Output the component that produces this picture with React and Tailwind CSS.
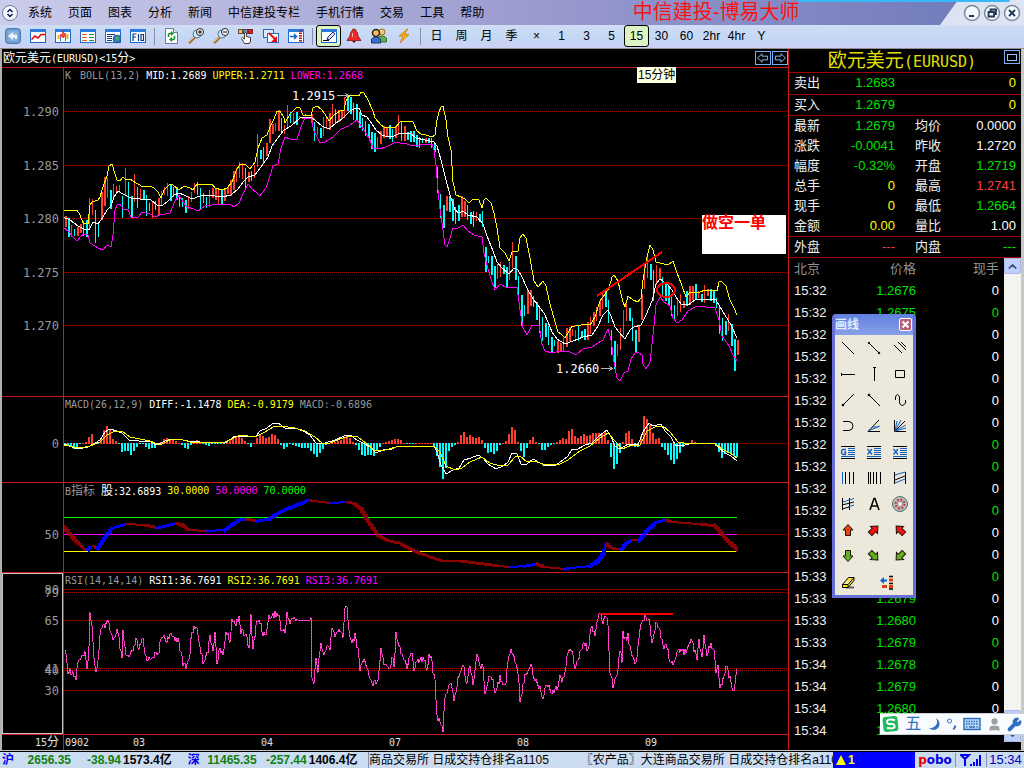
import { ChevronDown, ChevronUp, User, Wrench } from 'lucide-react';
import clsx from 'clsx';

const SANS = "font-['Liberation_Sans','Noto_Sans_CJK_SC',sans-serif]";
const MONO = "font-['DejaVu_Sans_Mono','Noto_Sans_CJK_SC',monospace]";

/* ---------- datos ---------- */

const menus = ['系统', '页面', '图表', '分析', '新闻', '中信建投专栏', '手机行情', '交易', '工具', '帮助'];
const periods = ['日', '周', '月', '季', '×', '1', '3', '5', '15', '30', '60', '2hr', '4hr', 'Y'];

const quotes = [
  ['最新', '1.2679', 'text-[#00e000]', '均价', '0.0000', 'text-white'],
  ['涨跌', '-0.0041', 'text-[#00e000]', '昨收', '1.2720', 'text-white'],
  ['幅度', '-0.32%', 'text-[#00e000]', '开盘', '1.2719', 'text-[#00e000]'],
  ['总手', '0', 'text-[#ffff00]', '最高', '1.2741', 'text-[#ff4040]'],
  ['现手', '0', 'text-[#ffff00]', '最低', '1.2664', 'text-[#00e000]'],
  ['金额', '0.00', 'text-[#ffff00]', '量比', '1.00', 'text-white'],
  ['外盘', '---', 'text-[#ff4040]', '内盘', '---', 'text-[#00e000]'],
];

// hora, precio, 1 = volumen en verde
const ticks = [
  ['15:32', '1.2676', 0], ['15:32', '1.2675', 1], ['15:32', '1.2676', 0], ['15:32', '1.2675', 0],
  ['15:32', '1.2676', 0], ['15:32', '1.2677', 0], ['15:32', '1.2676', 0], ['15:32', '1.2675', 1],
  ['15:32', '1.2676', 1], ['15:32', '1.2677', 0], ['15:32', '1.2676', 1], ['15:33', '1.2677', 0],
  ['15:33', '1.2678', 0], ['15:33', '1.2677', 1], ['15:33', '1.2679', 0], ['15:33', '1.2680', 0],
  ['15:33', '1.2679', 1], ['15:34', '1.2678', 1], ['15:34', '1.2679', 0], ['15:34', '1.2680', 0],
  ['15:34', '1.2679', 0],
];

const upper = '63,210 77,210 80,215 83,223 88,224 90,205 92,202 98,200 100,197 102,190 107,176 109,166 112,164 115,174 117,180 120,181 123,177 126,180 130,179 136,183 140,185 142,187 150,186 154,188 158,192 161,198 164,190 167,187 170,184 173,185 179,190 184,186 190,188 193,190 197,184 212,184 215,188 222,190 227,188 232,182 236,171 240,164 246,165 250,169 255,162 258,148 262,138 267,135 270,127 274,119 277,111 280,111 284,118 285,123 290,114 297,107 300,108 303,115 311,116 313,108 317,106 321,109 325,114 329,121 334,115 340,111 344,110 346,101 350,95 359,96 361,92 364,93 368,100 373,111 375,118 381,125 384,127 395,128 400,122 410,121 413,122 417,131 421,134 426,135 432,137 435,135 437,120 439,112 441,107 443,106 446,120 448,137 451,150 453,182 456,195 461,197 465,199 469,203 473,199 479,200 482,208 484,200 486,198 491,203 494,213 497,228 500,248 505,253 509,261 512,252 518,251 520,238 523,234 526,238 530,258 534,281 538,287 543,281 546,286 549,300 553,315 558,332 561,334 565,338 572,326 575,326 588,324 590,325 595,317 600,301 605,294 609,288 612,277 614,275 618,281 620,290 623,302 625,307 628,296 633,300 638,302 641,298 643,280 647,257 650,245 653,250 656,262 660,263 668,265 673,261 677,273 681,283 686,297 690,292 700,292 705,290 717,291 719,282 721,281 726,286 730,300 734,308 737,315';
const middle = '63,217 70,220 78,226 84,229 89,230 93,222 98,224 103,217 107,210 111,206 114,197 118,191 123,194 131,198 140,199 150,199 157,205 163,205 168,201 174,195 179,193 184,195 190,198 195,198 202,195 215,196 222,197 231,195 238,189 243,182 248,177 255,175 261,167 268,157 272,146 278,138 284,130 291,126 300,118 305,117 311,117 316,121 322,126 329,129 336,123 342,119 350,111 356,108 359,108 362,115 367,117 372,124 376,130 382,135 388,137 394,136 400,133 410,133 416,138 425,140 434,142 437,146 441,160 445,176 450,195 455,210 459,213 463,211 468,215 477,217 483,224 487,236 493,251 497,262 502,268 509,274 514,268 518,270 522,277 527,288 533,299 538,305 544,313 548,322 552,332 557,339 565,344 573,341 583,337 592,335 598,326 603,315 608,310 611,316 615,327 619,332 625,339 630,330 634,327 641,325 646,315 652,301 656,284 660,279 667,284 672,290 676,297 681,304 688,305 695,300 707,299 716,300 720,307 725,315 731,325 737,338';
const lower = '63,227 69,232 73,237 77,241 81,236 84,234 88,235 90,243 95,246 98,248 103,250 107,245 111,247 113,235 115,210 117,205 120,204 123,209 128,210 131,217 138,217 142,212 150,214 155,217 160,215 170,213 175,201 179,195 183,202 187,207 194,209 198,211 205,206 212,205 222,204 231,205 234,207 239,203 243,194 248,184 252,189 256,192 260,196 266,188 270,176 273,166 278,164 281,148 285,137 290,139 297,139 302,124 305,118 311,118 314,131 320,143 325,142 333,137 341,129 349,126 357,120 362,127 369,138 373,148 379,149 386,147 396,142 400,143 407,144 413,146 420,145 432,144 434,150 436,165 438,190 440,209 443,230 445,245 447,247 450,238 453,228 458,228 463,225 468,231 474,235 482,237 484,253 487,265 490,276 495,290 500,284 507,288 517,287 520,310 523,328 527,335 532,325 539,325 542,344 545,351 552,353 560,351 570,352 576,355 583,349 592,347 598,343 603,340 608,329 611,340 614,362 617,378 620,381 624,373 628,371 631,359 635,353 638,352 642,355 643,364 646,369 650,362 653,335 656,305 660,297 664,302 670,306 673,318 677,323 682,320 688,311 697,306 715,308 719,320 722,336 729,346 733,355 737,361';
const price = '64,217 67,228 72,232 76,231 82,226 87,230 89,215 91,200 94,222 97,238 99,220 103,195 107,188 110,198 112,193 116,190 120,188 122,205 124,190 126,175 129,205 132,210 134,190 137,198 142,192 147,207 153,208 158,205 162,193 168,191 175,194 180,200 185,207 190,198 196,186 200,197 206,201 212,194 220,196 226,193 230,187 234,177 240,168 246,178 250,180 254,170 257,150 262,155 266,150 269,132 274,128 278,120 283,133 287,118 293,117 311,117 314,130 320,132 327,122 333,113 340,117 345,104 349,106 356,112 361,125 367,130 373,145 379,138 385,130 392,136 398,126 402,133 410,136 418,140 425,141 433,142 435,150 437,180 439,205 442,210 444,218 446,205 450,202 453,215 457,215 462,206 467,212 472,222 477,215 482,220 485,258 490,260 494,278 498,270 502,268 507,280 512,255 517,275 520,310 524,312 528,300 532,298 537,312 541,328 546,330 551,345 556,345 562,345 567,336 572,333 578,335 585,332 590,326 596,315 600,305 604,297 607,302 610,335 613,358 617,350 621,335 625,310 628,310 632,330 636,345 640,325 642,290 645,270 649,265 653,285 658,270 661,285 666,292 670,300 673,312 680,304 687,300 692,292 700,297 706,292 712,296 717,305 720,325 724,330 728,322 731,335 734,355 737,347';
const macdBars = '64,0 70,-4 75,-6 78,-3 80,0 88,3 91,14 94,3 97,-3 100,2 103,12 107,18 110,14 113,5 117,2 119,0 122,-9 127,-7 131,-12 135,-6 139,-1 143,-1 148,-6 155,-5 159,-1 163,5 168,6 173,4 180,1 184,-4 188,-6 191,-2 196,4 199,3 203,-1 208,-3 212,-1 225,0 230,4 234,8 240,8 243,5 246,2 251,-4 255,2 259,10 262,8 268,5 271,11 276,8 279,3 283,-6 286,-5 290,-1 295,-3 302,-5 308,-5 313,-10 317,-14 321,-8 325,-3 328,-1 332,2 340,3 344,7 348,8 352,3 357,-3 360,-9 363,-13 370,-12 374,-13 379,-5 383,1 389,3 396,5 400,5 404,1 408,-1 415,0 425,1 433,0 436,-10 439,-20 443,-36 446,-25 449,-8 453,-3 457,0 460,7 463,14 467,7 471,9 475,5 480,8 483,2 486,-8 489,-11 492,-8 495,-12 499,-3 502,1 507,3 511,16 514,18 517,5 520,-4 523,-17 526,-8 529,2 532,9 535,3 539,-1 543,-9 548,-4 553,-1 557,2 562,6 566,5 571,18 574,8 578,6 583,10 588,8 593,11 600,11 605,12 607,10 610,-8 613,-26 616,-25 620,-10 623,2 625,10 629,13 632,5 635,-4 637,-8 640,3 642,12 644,28 648,24 652,14 655,4 659,6 662,-4 666,-8 670,-15 674,-21 678,-14 683,-4 688,0 692,4 697,1 714,1 718,-6 721,-16 726,-10 731,-11 737,-14';
const diff = '63,444 70,446 77,449 88,447 95,443 100,440 105,432 110,429 117,431 122,433 129,440 136,440 142,442 150,441 156,445 163,442 170,439 178,439 188,441 200,442 225,443 235,436 247,436 256,436 260,431 267,428 272,424 278,423 285,428 295,428 303,431 310,435 316,443 325,443 335,440 344,436 350,435 357,440 363,443 370,447 376,453 383,450 392,449 398,446 405,446 418,447 434,446 437,452 441,465 446,474 453,470 459,468 464,460 471,458 478,455 483,458 488,464 496,469 503,466 508,462 512,453 517,454 521,464 526,465 533,459 540,463 545,466 556,465 563,460 568,456 572,449 576,450 585,445 592,443 598,437 604,432 607,430 611,437 615,446 620,449 628,444 638,445 643,432 649,423 653,426 661,424 665,431 671,437 676,446 685,445 692,443 714,443 719,448 725,453 731,456 737,461';
const dea = '63,445 80,448 90,446 100,442 107,435 115,431 123,432 130,437 140,439 150,441 160,445 170,440 180,439 190,442 210,443 225,442 240,435 255,437 265,432 273,427 280,426 295,428 305,431 315,437 322,443 330,443 340,439 350,436 358,437 366,443 375,451 385,450 400,446 410,446 434,446 440,452 446,466 455,470 462,468 470,462 482,457 490,463 500,466 508,465 515,457 520,456 527,462 535,461 545,465 560,464 568,460 580,451 590,446 600,438 608,433 615,441 622,449 632,445 640,445 647,431 655,427 663,426 670,432 678,442 690,444 714,443 722,449 730,453 737,458';
const bLine = '64,527 71,535 78,543 85,549 88,550 91,547 94,546 98,548 107,535 113,528 120,526 126,524 145,525 158,528 170,525 178,523 182,525 190,530 208,531 225,530 232,525 240,520 247,519 257,521 270,519 280,512 300,504 310,500 313,501 330,503 348,502 355,504 362,510 370,524 380,537 390,541 400,543 420,553 442,561 460,561 500,566 510,567 525,566 537,564 545,567 565,569 570,568 590,566 598,561 604,552 607,544 612,548 617,549 622,549 628,542 633,540 640,540 647,531 657,522 667,520 672,522 700,524 715,526 720,531 728,541 737,549';
const rsi = '63,646 66,655 68,670 73,672 76,679 78,660 82,658 85,655 87,670 89,645 90,614 92,628 94,655 96,672 98,660 100,635 103,623 105,628 108,622 112,636 115,639 117,631 119,640 122,661 123,633 126,656 130,657 134,648 136,640 139,650 143,639 145,655 149,660 153,655 158,655 160,645 163,634 166,640 172,636 179,640 181,655 183,664 187,666 190,652 192,632 196,625 199,640 203,662 208,650 210,638 213,648 215,632 217,665 219,650 223,655 226,632 230,640 232,619 235,625 239,616 241,632 246,634 249,650 251,617 253,648 257,621 261,624 263,635 267,630 269,617 275,614 279,615 281,629 285,633 287,613 290,622 293,618 296,620 311,620 312,675 314,681 316,660 318,672 321,640 324,658 327,645 330,650 332,628 335,635 339,632 343,635 345,609 347,608 349,630 352,642 355,636 358,650 360,668 363,660 367,665 370,680 374,684 378,678 381,649 384,663 388,664 389,670 393,655 394,668 396,632 400,648 404,660 407,668 410,654 412,654 414,668 418,660 424,660 427,668 429,655 431,655 433,670 435,680 437,715 440,725 443,730 445,695 449,687 451,685 454,700 459,675 463,665 467,684 470,664 473,684 477,653 480,667 483,668 485,692 488,680 492,678 495,692 500,678 506,684 508,660 511,648 516,665 519,680 520,702 524,680 531,662 534,678 538,684 543,697 547,682 551,692 558,686 560,675 562,684 565,670 568,650 572,648 575,672 580,652 584,643 588,650 592,625 595,635 599,615 603,622 606,615 608,625 610,670 613,687 617,672 620,652 622,660 623,633 627,642 628,636 631,652 636,665 640,630 645,615 649,619 652,641 656,623 660,630 664,650 666,643 670,660 673,665 678,653 686,651 691,636 694,650 697,658 699,642 702,658 704,636 707,655 711,643 714,650 716,670 718,663 720,690 723,680 726,666 729,675 734,692 736,677';

// interpola una serie cada "step" px
const sample = (series, step = 2) => {
  const pts = series.split(' ').map((p) => p.split(',').map(Number));
  const out = [];
  let i = 0;
  for (let x = 65; x <= 737; x += step) {
    while (i < pts.length - 2 && pts[i + 1][0] < x) i++;
    const [x0, y0] = pts[i];
    const [x1, y1] = pts[i + 1];
    out.push([x, y0 + ((y1 - y0) * (x - x0)) / (x1 - x0)]);
  }
  return out;
};

const rand = (n) => {
  const v = Math.sin(n * 12.9898) * 43758.5453;
  return v - Math.floor(v);
};

const candles = sample(price, 3).map(([x, y], i, all) => {
  const prev = i ? all[i - 1][1] : y;
  const move = y - prev + (rand(i) - 0.5) * 7;
  const flat = x > 296 && x < 311;
  const size = flat ? 1 : 2 + rand(i + 500) * 6 + Math.min(Math.abs(y - prev) / 2, 9);
  return {
    x,
    top: Math.round(y - size + (rand(i + 90) - 0.5) * 4),
    h: Math.round(size * 2),
    w: rand(i + 40) > 0.5 ? 2 : 1,
    up: move < 0,
  };
});

/* ---------- gráficos ---------- */

const Plot = ({ top, height, children }) => (
  <svg
    className="absolute inset-0 h-full w-full"
    viewBox={`64 ${top} 724 ${height}`}
    preserveAspectRatio="none"
    shapeRendering="crispEdges"
    fill="none"
  >
    {children}
  </svg>
);

const GridLine = ({ y, color = '#a00000' }) => (
  <path d={`M64 ${y + 0.5}H788`} stroke={color} strokeDasharray="1 1" />
);

const Pane = ({ className, axis = [], top, height, legend, focused, notes, children }) => (
  <section className={clsx('flex border-b border-[#d01818]', className)}>
    <div className="relative w-[62px] shrink-0 border-r border-[#d01818]">
      {focused && <div className="absolute inset-0 border border-[#c8c8c8]" />}
      {axis.map(([label, y]) => (
        <span
          key={label}
          className={`absolute right-1 -translate-y-1/2 text-xs leading-4 text-[#989898] ${MONO}`}
          style={{ top: `${((y - top) / height) * 100}%` }}
        >
          {label}
        </span>
      ))}
    </div>
    <div className="relative min-w-0 flex-1">
      <Plot top={top} height={height}>{children}</Plot>
      <div className={`relative flex gap-[6px] pl-px text-[10px] leading-4 whitespace-nowrap ${MONO}`}>
        {legend.map(([text, color], i) => (
          <span key={i} className={color}>{text}</span>
        ))}
      </div>
      {notes}
    </div>
  </section>
);

const place = (x, y, top, height) => ({
  left: `${((x - 64) / 724) * 100}%`,
  top: `${((y - top) / height) * 100}%`,
});

const PriceNotes = () => (
  <>
    <span className={`absolute -translate-y-1/2 text-xs leading-4 text-white ${MONO}`} style={place(292, 96, 68, 328)}>1.2915</span>
    <span className={`absolute -translate-y-1/2 text-xs leading-4 text-white ${MONO}`} style={place(556, 369, 68, 328)}>1.2660</span>
    <div
      className="absolute h-[39px] w-[84px] bg-white text-base leading-4 font-bold text-[#ff0000]"
      style={place(702, 215, 68, 328)}
    >
      做空一单
    </div>
    <div
      role="tooltip"
      className="absolute bg-[#ffffe1] px-[1px] text-xs leading-4 whitespace-nowrap text-black"
      style={place(637, 67, 68, 328)}
    >
      15分钟
    </div>
  </>
);

const PricePane = () => (
  <Pane
    className="h-[329px]"
    top={68}
    height={328}
    axis={[['1.290', 112], ['1.285', 166], ['1.280', 219], ['1.275', 273], ['1.270', 326]]}
    legend={[
      ['K', 'pr-[3px] text-[#989898]'],
      ['BOLL(13,2)', 'text-[#989898]'],
      ['MID:1.2689', 'text-white'],
      ['UPPER:1.2711', 'text-[#ffff00]'],
      ['LOWER:1.2668', 'text-[#ff00ff]'],
    ]}
    notes={<PriceNotes />}
  >
    {[111, 165, 218, 272, 325].map((y) => <GridLine key={y} y={y} />)}
    {candles.map((c) => (
      <rect key={c.x} x={c.x} y={c.top} width={c.w} height={c.h} fill={c.up ? '#ff4030' : '#00ffff'} />
    ))}
    <polyline points={upper} stroke="#ffff00" />
    <polyline points={lower} stroke="#ff00ff" />
    <polyline points={middle} stroke="#ffffff" />
    <path d="M337 95.500H348M345 93L348 95.500L345 98M601 368.500H612M609 366L612 368.500L609 371" stroke="#b0b0b0" />
    <path d="M597 296L662 252" stroke="#ff0000" strokeWidth="2" />
    <ellipse cx="666" cy="290" rx="9" ry="7" stroke="#ff0000" strokeWidth="2" />
  </Pane>
);

const MacdPane = () => (
  <Pane
    className="h-[86px]"
    top={397}
    height={85}
    axis={[['0', 444]]}
    legend={[
      ['MACD(26,12,9)', 'text-[#989898]'],
      ['DIFF:-1.1478', 'text-white'],
      ['DEA:-0.9179', 'text-[#ffff00]'],
      ['MACD:-0.6896', 'text-[#989898]'],
    ]}
  >
    <GridLine y={443} />
    {sample(macdBars, 3).map(([x, v]) => {
      const h = Math.max(1, Math.round(Math.abs(v)));
      return <rect key={x} x={x - 1} y={v > 0 ? 444 - h : 443} width="2" height={h} fill={v > 0 ? '#ff4030' : '#00ffff'} />;
    })}
    <polyline points={diff} stroke="#ffffff" />
    <polyline points={dea} stroke="#ffff00" />
  </Pane>
);

const BPane = () => (
  <Pane
    className="h-[90px]"
    top={483}
    height={89}
    axis={[['50', 535]]}
    legend={[
      [<>B<span className="text-xs leading-4">指标</span></>, 'text-[#989898]'],
      [<><span className="text-xs leading-4">股</span>:32.6893</>, 'text-white'],
      ['30.0000', 'text-[#ffff00]'],
      ['50.0000', 'text-[#ff00ff]'],
      ['70.0000', 'text-[#00ff00]'],
    ]}
  >
    <GridLine y={534} />
    <path d="M64 517.500H737" stroke="#00ff00" />
    <path d="M64 534.500H737" stroke="#ff00ff" />
    <path d="M64 551.500H737" stroke="#ffff00" />
    {sample(bLine).map(([x, y], i, all) => {
      const slope = i < all.length - 1 ? all[i + 1][1] - y : 2;
      const h = 2 + Math.round(Math.abs(slope) * 2);
      return <rect key={x} x={x - 1} y={Math.round(y - h / 2)} width="2" height={h} fill={slope < 0 ? '#0000ff' : '#8b0000'} />;
    })}
  </Pane>
);

const RsiPane = () => {
  const points = sample(rsi, 1)
    .map(([x, y], i) => `${x},${x > 297 && x < 311 ? y : (y + (rand(i + 7) - 0.5) * 7).toFixed(1)}`)
    .join(' ');
  return (
    <Pane
      focused
      className="h-[162px]"
      top={573}
      height={161}
      axis={[['80', 590], ['79', 593], ['65', 621], ['41', 669], ['40', 671], ['30', 691]]}
      legend={[
        ['RSI(14,14,14)', 'text-[#989898]'],
        ['RSI1:36.7691', 'text-white'],
        ['RSI2:36.7691', 'text-[#ffff00]'],
        ['RSI3:36.7691', 'text-[#ff00ff]'],
      ]}
    >
      {[589, 592, 620, 668, 670, 690].map((y) => <GridLine key={y} y={y} />)}
      <polyline points={points} stroke="#ff20e0" />
      <polyline points={points} stroke="#f08090" strokeDasharray="1 2" />
      <path d="M600 614H673" stroke="#ff0000" strokeWidth="2" />
    </Pane>
  );
};

const TimeAxis = () => (
  <div className={`flex h-[15px] text-[10px] leading-[15px] text-[#e0e0e0] ${MONO}`}>
    <div className="w-[62px] shrink-0 border-r border-[#d01818] pr-1 text-right">
      15<span className="text-xs leading-[15px]">分</span>
    </div>
    <div className="relative flex-1">
      {[['0902', 65], ['03', 133], ['04', 261], ['07', 389], ['08', 517], ['09', 645]].map(([label, x]) => (
        <span key={label} className="absolute" style={{ left: `${((x - 64) / 724) * 100}%` }}>{label}</span>
      ))}
    </div>
  </div>
);

const ChartArea = () => (
  <main className="flex min-w-0 flex-1 flex-col border-r border-[#d01818]">
    <header className="flex h-[19px] items-center justify-between border-b border-[#d01818] pl-px">
      <h2 className={`text-[10px] leading-4 text-white ${MONO}`}>
        <span className="text-xs leading-4">欧元美元</span>(EURUSD)&lt;15<span className="text-xs leading-4">分</span>&gt;
      </h2>
      <div className="flex gap-px">
        {['M2 6.500L7 2V4.500H13V8.500H7V11Z', 'M14 6.500L9 2V4.500H3V8.500H9V11Z'].map((d, i) => (
          <button key={d} aria-label={i ? '下一个' : '上一个'} className="h-[14px] w-4 border border-[#70b0f8]">
            <svg viewBox="1 0 14 13" className="h-3 w-[14px]" fill="none" stroke="#90c8ff"><path d={d} /></svg>
          </button>
        ))}
      </div>
    </header>
    <PricePane />
    <MacdPane />
    <BPane />
    <RsiPane />
    <TimeAxis />
  </main>
);

/* ---------- barra de herramientas ---------- */

const Frame = ({ children }) => (
  <>
    <rect x="0.500" y="1.500" width="15" height="13" fill="#fff" stroke="#1c68c8" />
    <rect x="0" y="1" width="16" height="3" fill="#2c7ce0" />
    {children}
  </>
);

const Lens = ({ minus }) => (
  <>
    <path d="M1 15L7 9" stroke="#a07030" strokeWidth="2.500" />
    <path d="M1 14L7 8" stroke="#f0d080" />
    <circle cx="9" cy="6" r="4" fill="#c8e8ff" stroke="#607890" />
    <circle cx="12" cy="4" r="3.500" fill="#fff" stroke="#202020" />
    <path d={minus ? 'M10 4H14' : 'M10 4H14M12 2V6'} stroke="#000" />
  </>
);

const toolIcons = {
  返回: (
    <>
      <rect x="0.500" y="0.500" width="15" height="15" rx="3" fill="#6f9fd0" stroke="#4878b0" />
      <rect x="3" y="3" width="10" height="10" rx="2" fill="#88b0dc" />
      <path d="M3 8L8 4V6.500H12V11H10V9.500H8V12Z" fill="#e8f4ff" />
    </>
  ),
  走势图: <Frame><path d="M1.500 11.500L5 8L8 10L11 6.500H15" stroke="#e01010" strokeWidth="1.600" /></Frame>,
  K线图: (
    <Frame>
      <path d="M8 3V10M6 6V9M10 5V9" stroke="#e01010" strokeWidth="1.500" />
      <path d="M3.500 7V11M12.500 6V11" stroke="#f0b000" strokeWidth="2" />
      <path d="M5.500 9V13M10.500 9V13" stroke="#2070d0" />
    </Frame>
  ),
  报价: (
    <Frame>
      <path d="M2 6.500H7M2 9.500H7M2 12.500H7" stroke="#e06020" />
      <path d="M9 6.500H14M9 9.500H14M9 12.500H14" stroke="#209050" />
    </Frame>
  ),
  资讯: (
    <Frame>
      <path d="M2 6.500H10M2 8.500H7M2 10.500H7M2 12.500H7" stroke="#203878" />
      <circle cx="12" cy="11" r="4" fill="#3078c8" stroke="#204880" strokeWidth="0.700" />
      <path d="M10 9L13 8L14 11L12 13L11 11Z" fill="#48b048" />
    </Frame>
  ),
  F10: <Frame><path d="M3 13V6H6.500M3 9H6M8.500 6V13M11 6.500H13.500V12.500H11Z" stroke="#103880" strokeWidth="1.200" /></Frame>,
  刷新: (
    <>
      <path d="M2.500 0.500H10.500L14.500 4.500V15.500H2.500Z" fill="#fff" stroke="#608098" />
      <path d="M10.500 0.500V4.500H14.500" fill="#d8e8f0" stroke="#608098" />
      <path d="M5.500 9V6.500Q6 5 9 5.500M11.500 8V10.500Q11 12 8 11.500" stroke="#109030" strokeWidth="1.600" />
      <path d="M8 3L11 5.500L8 8ZM9 9L6 11.500L9 14Z" fill="#109030" />
    </>
  ),
  放大: <Lens />,
  缩小: <Lens minus />,
  选择: (
    <>
      <rect x="0.500" y="1.500" width="4" height="4" fill="#f0c050" stroke="#605030" />
      <rect x="5.500" y="1.500" width="4" height="4" fill="#7088b0" stroke="#404860" />
      <rect x="10.500" y="1.500" width="4" height="4" fill="#e02020" stroke="#802020" />
      <path d="M6.500 15.500L3.500 10.500L4.500 9.500L6.500 11V5Q7.500 4 8.500 5V8.500L12.500 9.500V13L11.500 15.500Z" fill="#fff" stroke="#403830" />
    </>
  ),
  下载: (
    <>
      <rect x="0.500" y="1.500" width="10" height="8" fill="#dcecff" stroke="#2868c0" />
      <rect x="4.500" y="5.500" width="11" height="9" fill="#fff" stroke="#2868c0" />
      <path d="M6 5L13 12" stroke="#e01010" strokeWidth="2" />
      <path d="M14 8V14H8Z" fill="#e01010" />
    </>
  ),
  插入: (
    <Frame>
      <path d="M2 8.500H8M6 6L8.500 8.500L6 11" stroke="#1060d0" strokeWidth="1.500" />
      <path d="M12.500 2V14" stroke="#d01010" strokeWidth="3" strokeDasharray="1.500 1" />
    </Frame>
  ),
  画线: (
    <Frame>
      <path d="M2 12.500H8" stroke="#000" />
      <path d="M6 12L7 9L12 4L14 6L9 11Z" fill="#e0e8ff" stroke="#202878" />
    </Frame>
  ),
  预警: (
    <>
      <path d="M8 1Q10 1 10 3Q12 4 12 8L15 12.500H1L4 8Q4 4 6 3Q6 1 8 1Z" fill="#f02828" stroke="#801010" strokeWidth="0.800" />
      <path d="M6.500 5V9" stroke="#ffb0a0" />
      <path d="M6 13H10L8 15Z" fill="#601010" />
    </>
  ),
  用户: (
    <>
      <circle cx="11" cy="4" r="3" fill="#f0c880" stroke="#a07020" />
      <path d="M7 14V10Q11 6 15.500 10V14Z" fill="#60b050" stroke="#307030" />
      <circle cx="5" cy="5" r="3.500" fill="#f0c060" stroke="#302010" strokeWidth="1.500" />
      <path d="M0.500 15V11Q5 7 9.500 11V15Z" fill="#3870c8" stroke="#183870" />
    </>
  ),
  闪电: <path d="M12 0.500L3 8H7L4 15L13 6.500H8.500Z" fill="#ffb010" stroke="#c07000" strokeWidth="0.700" />,
};

const ToolButton = ({ label, active, children }) => (
  <button
    aria-label={label}
    className={clsx(
      'flex h-[22px] w-[25px] shrink-0 items-center justify-center text-xs leading-4 whitespace-nowrap text-black',
      active && 'rounded-[3px] border border-black bg-[#dcf4c4]',
    )}
  >
    {children}
  </button>
);

const Separator = () => (
  <div className="flex w-2 shrink-0 justify-center py-[3px]"><div className="w-px bg-[#8890a8]" /></div>
);

const Toolbar = () => (
  <div role="toolbar" className="flex h-6 border-b border-[#909090] bg-linear-to-b from-[#cfdcf4] via-[#c4d8f4] to-[#ccd0f4]">
    {Object.entries(toolIcons).map(([name, icon]) => [
      (name === '刷新' || name === '画线') && <Separator key={`${name}-sep`} />,
      <ToolButton key={name} label={name} active={name === '画线'}>
        <svg viewBox="0 0 16 16" className="size-4" fill="none">{icon}</svg>
      </ToolButton>,
    ])}
    <Separator />
    {periods.map((p) => (
      <ToolButton key={p} label={p} active={p === '15'}>{p}</ToolButton>
    ))}
  </div>
);

const TitleBar = () => (
  <div className="relative flex h-[25px] bg-linear-to-r from-[#ccccec] via-[#9c9ccf] to-[#6c78b8]">
    <div className="flex w-5 shrink-0 items-center justify-center">
      <svg viewBox="0 0 18 18" className="size-[18px]" fill="none">
        <circle cx="9" cy="9" r="7.500" fill="#f0f8ff" stroke="#707890" />
        <path d="M6.500 8L9 5.500L11.500 8M6.500 10L9 12.500L11.500 10" stroke="#101840" strokeWidth="1.500" />
      </svg>
    </div>
    <nav className="flex shrink-0 text-xs leading-4 text-black">
      {menus.map((m) => (
        <button key={m} className="px-2 whitespace-nowrap">{m}</button>
      ))}
    </nav>
    <h1 className="min-w-0 flex-1 overflow-hidden text-center text-xl leading-6 whitespace-nowrap text-[#ff1010]">中信建投-博易大师</h1>
    <div className="flex w-[84px] shrink-0 items-center justify-end gap-[2px] bg-[#dce4f4] pr-[3px] [clip-path:polygon(18px_0,100%_0,100%_100%,0_100%)]">
      {[['最小化', 'M6 12H11'], ['还原', 'M7.500 7V5.500H13V10H11M5.500 8H11V12.500H5.500Z'], ['关闭', 'M6 6L12 12M12 6L6 12']].map(([name, d]) => (
        <button key={name} aria-label={name}>
          <svg viewBox="0 0 18 18" className="size-[18px]" fill="none">
            <circle cx="9" cy="9" r="7.500" fill="#f4f8fc" stroke="#808898" strokeWidth="1.500" />
            <path d={d} stroke="#203858" strokeWidth="1.800" />
          </svg>
        </button>
      ))}
    </div>
    <div className="absolute top-0 right-[14px] h-[2px] w-[212px] rounded-b-sm bg-[#38b8f8]" />
  </div>
);

/* ---------- panel de cotización ---------- */

const QuotePanel = () => (
  <aside className="relative flex w-[232px] shrink-0 flex-col text-[13px] leading-4 text-[#f0f0f0]">
    <div className="relative flex h-6 items-center justify-center border-b border-[#a00000] pr-[6px] text-[#e0e000]">
      <h2 className={`text-[19px] leading-5 ${MONO}`}>
        欧元美元<span className="text-[15px]">(EURUSD)</span>
      </h2>
      <button aria-label="展开" className="absolute top-px right-px flex h-[14px] w-4 items-center justify-center border border-[#70b0f8]">
        <span className="h-[7px] w-[10px] border border-[#90c8ff]" />
      </button>
    </div>
    <table className="w-full table-fixed">
      <tbody>
        {[['卖出', '1.2683'], ['买入', '1.2679']].map(([label, value]) => (
          <tr key={label} className="h-[21px] border-b border-[#a00000]">
            <th scope="row" className="w-[40px] p-0 pl-[5px] text-left font-normal">{label}</th>
            <td className="w-[66px] p-0 text-right text-[#00e000]">{value}</td>
            <td className="p-0 pr-[5px] text-right text-[#ffff00]">0</td>
          </tr>
        ))}
      </tbody>
    </table>
    <table className="w-full table-fixed">
      <tbody>
        {quotes.map(([a, av, ac, b, bv, bc], i) => (
          <tr key={a} className={i < 5 ? 'h-5' : 'h-[21px] border-b border-[#a00000]'}>
            <th scope="row" className="w-[40px] p-0 pl-[5px] text-left font-normal">{a}</th>
            <td className={clsx('w-[66px] p-0 text-right', ac)}>{av}</td>
            <th scope="row" className="w-[60px] p-0 pl-5 text-left font-normal">{b}</th>
            <td className={clsx('p-0 pr-[5px] text-right', bc)}>{bv}</td>
          </tr>
        ))}
      </tbody>
    </table>
    <div className="flex">
      <table className="min-w-0 flex-1 table-fixed">
        <thead className="text-[#909090]">
          <tr className="h-[22px]">
            <th className="w-[45px] p-0 pl-[5px] text-left font-normal">北京</th>
            <th className="w-[82px] p-0 text-right font-normal">价格</th>
            <th className="p-0 pr-[5px] text-right font-normal">现手</th>
          </tr>
        </thead>
        <tbody>
          {ticks.map(([time, value, green], i) => (
            <tr key={i} className="h-[22px]">
              <td className="p-0 pl-[5px]">{time}</td>
              <td className="p-0 text-right text-[#00e000]">{value}</td>
              <td className={clsx('p-0 pr-[5px] text-right', green ? 'text-[#00e000]' : 'text-white')}>0</td>
            </tr>
          ))}
        </tbody>
      </table>
      <div className="flex w-[17px] shrink-0 flex-col justify-between bg-[#f4f4ee]">
        <button aria-label="向上" className="flex h-4 items-center justify-center rounded-xs border border-[#a8b8e8] bg-[#c0d0fc]">
          <ChevronUp size={13} strokeWidth={3} color="#405080" />
        </button>
        <button aria-label="向下" className="flex h-8 items-end justify-center rounded-xs border border-[#a8b8e8] bg-[#c0d0fc]">
          <ChevronDown size={13} strokeWidth={3} color="#405080" />
        </button>
      </div>
    </div>
    <DrawPalette />
  </aside>
);

/* ---------- paleta de dibujo ---------- */

const Levels = ({ mark }) => (
  <>
    <path d="M1 2.500H15M1 14.500H15" stroke="#000" />
    <path d="M8 4.500H15M8 6.500H15M8 8.500H15M8 10.500H15M1 12.500H15" stroke="#1060c0" />
    <path d={mark} stroke="#1060c0" strokeWidth="1.300" />
  </>
);

const arrowUp = 'M8 2.500L13 8H10.500V13.500H5.500V8H3Z';
const Arrow = ({ turn, color }) => (
  <path d={arrowUp} fill={color} stroke="#201008" transform={`rotate(${turn} 8 8)`} />
);

const drawTools = [
  ['直线', <path d="M2 2L14 14" />],
  ['线段', <><path d="M2 2L13 13" /><circle cx="3" cy="3" r="0.700" fill="#000" /><circle cx="13" cy="13" r="0.800" fill="#000" /></>],
  ['平行线', <path d="M2 5L10 13M6 2L14 10M9 2L14 7" />],
  ['水平线', <path d="M1 8.500H15M1.500 7V10" />],
  ['垂直线', <path d="M8.500 1V15M7 1.500H10" />],
  ['矩形', <path d="M3.500 4.500H12.500V11.500H3.500Z" />],
  ['射线', <><path d="M3 13L14 2" /><circle cx="3" cy="13" r="0.900" fill="#000" /></>],
  ['下射线', <><path d="M3 3L14 14" /><circle cx="3" cy="3" r="0.900" fill="#000" /></>],
  ['曲线', <path d="M3.500 8V5Q5.500 0 7.500 5V11Q10 16 13.500 11V8" />],
  ['弧线', <path d="M3 3.500H9Q13 4 13 8T9 12.500H3" />],
  ['角度线', <><path d="M2 13.500L13 2M2 13.500H14" /><path d="M2 13L14 8M6 9L12 9" stroke="#1060c0" /></>],
  ['扇形线', <><path d="M2.500 2V13.500H14M3 13L13 3" /><path d="M3 13L5 3M3 13L9 2M3 13L14 7M3 13L14 10" stroke="#1060c0" /></>],
  ['黄金分割', <Levels mark="M6 5.500H3Q1.500 5.500 1.500 8T4 10.500H5.500V8H4" />],
  ['百分比线', <Levels mark="M1.500 5L6 10.500M6 5L1.500 10.500" />],
  ['波段线', <Levels mark="M1.500 5L6 10.500M6 5L1.500 10.500" />],
  ['周期线', <><path d="M5.500 2V14M9.500 2V14M13.500 2V14" /><path d="M2.500 2V14" stroke="#1060c0" /></>],
  ['费氏线', <path d="M2.500 2V14M4.500 2V14M7.500 2V14M10.500 2V14M14.500 2V14" />],
  ['回归带', <><path d="M2.500 2V14M13.500 2V14M3 10L13 6" /><path d="M3 5L13 2M3 13L13 9" stroke="#1060c0" /></>],
  ['通道', <><path d="M2.500 2V14M9.500 2V14M2 9L14 6M2 13L9 11" /><path d="M3 6L14 2.500M8 11L14 9" stroke="#1060c0" /></>],
  ['文字', <path d="M4 14L8 2.500H9L13 14M5.500 10H11.500" strokeWidth="1.500" />],
  ['图标', <><circle cx="8" cy="8" r="7.500" fill="#b8c0c0" stroke="#507070" /><circle cx="8" cy="8" r="4.500" stroke="#d03030" strokeWidth="2" strokeDasharray="2 1.500" /><circle cx="8" cy="8" r="2.500" fill="#f0f0f0" stroke="#888" /></>],
  ['上箭头', <Arrow turn={0} color="#e84010" />],
  ['右上箭头', <Arrow turn={45} color="#ff1010" />],
  ['左上箭头', <Arrow turn={-45} color="#ff1010" />],
  ['下箭头', <Arrow turn={180} color="#60b020" />],
  ['右下箭头', <Arrow turn={135} color="#60b020" />],
  ['左下箭头', <Arrow turn={225} color="#60b020" />],
];

const PaletteIcon = ({ children }) => (
  <svg viewBox="0 0 16 16" className="size-4" fill="none" stroke="#000">{children}</svg>
);

const DrawPalette = () => (
  <div className="absolute top-[265px] left-[43px] w-[84px] rounded-t-sm border-[3px] border-t-0 border-[#6870d8] bg-[#ece9dc]">
    <div className="flex h-[21px] items-center justify-between bg-linear-to-b from-[#6080e0] to-[#88a0e8] pr-[1px] text-xs font-bold text-[#e0ecff]">
      画线
      <button aria-label="关闭画线" className="flex size-[13px] items-center justify-center rounded-xs border border-white bg-[#b86078]">
        <svg viewBox="0 0 9 9" className="size-[9px]" stroke="#fff" strokeWidth="2"><path d="M1.500 1.500L7.500 7.500M7.500 1.500L1.500 7.500" /></svg>
      </button>
    </div>
    <div className="grid grid-cols-3">
      {drawTools.map(([name, icon]) => (
        <button key={name} aria-label={name} className="flex h-[26px] items-center justify-center">
          <PaletteIcon>{icon}</PaletteIcon>
        </button>
      ))}
    </div>
    <div className="flex h-[26px]">
      <button aria-label="删除" className="flex w-[26px] items-center justify-center">
        <PaletteIcon>
          <path d="M6 13.500H14" stroke="#606060" strokeWidth="2" />
          <path d="M2.500 10.500L8.500 3.500H14L8 10.500ZM2.500 10.500V13.500H8L14 6.500V3.500M8 10.500V13.500" fill="#ffe020" />
        </PaletteIcon>
      </button>
      <button aria-label="管理" className="flex flex-1 items-center justify-center">
        <PaletteIcon>
          <path d="M1 6.500L5 3V5.500H8V7.500H5V10Z" fill="#1060d0" stroke="none" />
          <path d="M3 12.500H8M10 6H14M10 12.500H14" stroke="#e04010" strokeWidth="3" />
          <path d="M10 2.500H14M10 9.500H14M10 15H14" strokeWidth="1.500" />
        </PaletteIcon>
      </button>
    </div>
  </div>
);

/* ---------- barra del método de entrada ---------- */

const ImeBar = () => (
  <div className="absolute right-0 bottom-[33px] flex h-[22px] w-36 items-center justify-between border-y border-[#c8d0d8] bg-[#f8fcff] px-[2px] text-[#3070c0]">
    <svg viewBox="0 0 18 18" className="size-[18px]" fill="none">
      <rect x="1" y="1.500" width="15" height="15" rx="3" fill="#20b860" transform="rotate(-6 9 9)" />
      <path d="M13 5Q5 3.500 5 6.500T9 9T12.500 12Q12 14 5 13" stroke="#fff" strokeWidth="2" />
    </svg>
    <span className="text-base leading-5">五</span>
    <svg viewBox="0 0 14 14" className="size-[14px]">
      <path d="M9 1Q12 7 7 10Q4 12 1 10.500Q5 14 9 12.500Q13 10 12.500 6Q12 3 9 1Z" fill="#3070c0" />
    </svg>
    <svg viewBox="0 0 12 16" className="h-4 w-3" fill="none" stroke="#3070c0">
      <circle cx="3.500" cy="5" r="2" /><path d="M9 9.500V11L7.500 13.500" strokeWidth="2" />
    </svg>
    <svg viewBox="0 0 18 14" className="h-[14px] w-[18px]" fill="none">
      <rect x="1" y="1.500" width="16" height="11" fill="#b8d8f8" stroke="#3070c0" strokeWidth="1.500" />
      <path d="M3 4.500H15M3 7H15" stroke="#3070c0" strokeWidth="1.500" strokeDasharray="1.500 1" />
      <path d="M3 10H4.500M6 10H12M13.500 10H15" stroke="#3070c0" strokeWidth="1.500" />
    </svg>
    <User size={15} fill="#a0a0a0" color="#a0a0a0" />
    <Wrench size={15} fill="#3070c0" />
  </div>
);

/* ---------- barra de estado ---------- */

const IndexQuote = ({ name, value, change, amount }) => (
  <div className="flex shrink-0 font-bold whitespace-nowrap">
    <span className="w-[18px] text-[#0000f0]">{name}</span>
    <span className="w-[51px] text-right text-[#108010]">{value}</span>
    <span className="w-[52px] pr-[2px] text-right text-[#108010]">{change}</span>
    <span>{amount}</span>
  </div>
);

const StatusBar = () => (
  <footer className="flex h-[18px] items-center border-t border-[#c0c0c0] bg-[#ccdcf0] text-xs leading-4 text-black shadow-[inset_0_1px_0_#000]">
    <div className="flex w-[368px] shrink-0 gap-4 pl-[2px]">
      <IndexQuote name="沪" value="2656.35" change="-38.94" amount="1573.4亿" />
      <IndexQuote name="深" value="11465.35" change="-257.44" amount="1406.4亿" />
    </div>
    <div className="flex min-w-0 flex-1 gap-8 overflow-hidden border-l border-[#8090b0] whitespace-nowrap">
      <span>商品交易所 日成交持仓排名a1105</span>
      <span>〖农产品〗大连商品交易所 日成交持仓排名a1105</span>
    </div>
    <div className="flex h-4 w-[82px] shrink-0 items-center gap-[2px] self-end bg-[#0000ff] pl-[3px] font-bold text-[#ffff00]">
      <svg viewBox="0 0 10 10" className="size-[10px]"><path d="M5 0L10 10H0Z" fill="#ffff00" /></svg>
      1
    </div>
    <div className="w-10 shrink-0 text-center font-['DejaVu_Sans',sans-serif] font-bold text-[#0000e0]">
      <span className="text-[#f00000]">p</span>obo
    </div>
    <div className="flex w-8 shrink-0 justify-center border-x border-[#8090b0]">
      <svg viewBox="0 0 22 14" className="h-[14px] w-[22px]" fill="none" stroke="#0000f0" strokeWidth="2">
        <path d="M1 2H9L5 6ZM5 6V13M11 13V11M14 13V9M17 13V6M20 13V2" />
      </svg>
    </div>
    <time className="w-[37px] shrink-0 text-center text-[13px] text-[#0000c0]">15:34</time>
  </footer>
);

export default function App() {
  return (
    <div className={`relative bg-black ${SANS}`}>
      <TitleBar />
      <Toolbar />
      <div className="flex border-r-[3px] border-l-2 border-r-[#c8c8c8] border-l-[#b0b0b0]">
        <ChartArea />
        <QuotePanel />
      </div>
      <StatusBar />
      <ImeBar />
    </div>
  );
}
